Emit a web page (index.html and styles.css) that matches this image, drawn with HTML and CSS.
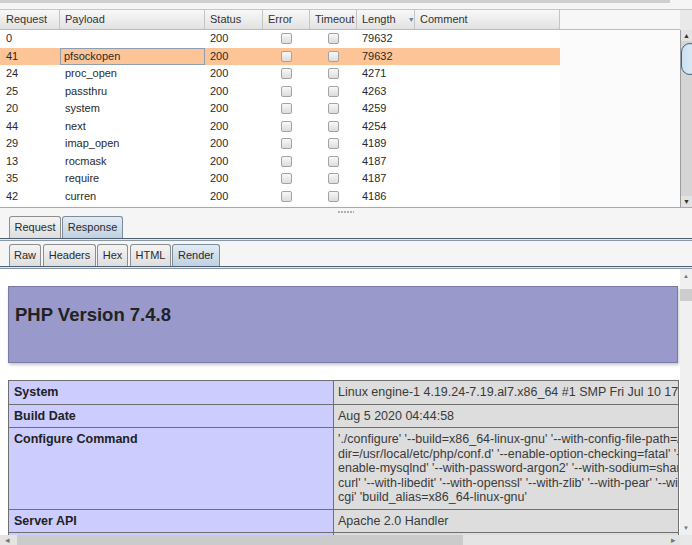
FILE: index.html
```html
<!DOCTYPE html>
<html>
<head>
<meta charset="utf-8">
<link rel="stylesheet" href="styles.css">
</head>
<body>
<div class="app">
  <div class="topstrip"></div>
  <div class="results">
    <div class="grid">
      <div class="thead">
        <div class="th c1">Request</div>
        <div class="th c2">Payload</div>
        <div class="th c3">Status</div>
        <div class="th c4">Error</div>
        <div class="th c5">Timeout</div>
        <div class="th c6 sorted">Length<span class="sort">▼</span></div>
        <div class="th c7">Comment</div>
        <div class="thfill"></div>
      </div>
      <div class="tbody">
        <div class="tr"><div class="td c1">0</div><div class="td c2"></div><div class="td c3">200</div><div class="td c4"><span class="cb"></span></div><div class="td c5"><span class="cb"></span></div><div class="td c6">79632</div><div class="td c7"></div></div>
        <div class="tr sel"><div class="td c1">41</div><div class="td c2 focus">pfsockopen</div><div class="td c3">200</div><div class="td c4"><span class="cb"></span></div><div class="td c5"><span class="cb"></span></div><div class="td c6">79632</div><div class="td c7"></div></div>
        <div class="tr"><div class="td c1">24</div><div class="td c2">proc_open</div><div class="td c3">200</div><div class="td c4"><span class="cb"></span></div><div class="td c5"><span class="cb"></span></div><div class="td c6">4271</div><div class="td c7"></div></div>
        <div class="tr"><div class="td c1">25</div><div class="td c2">passthru</div><div class="td c3">200</div><div class="td c4"><span class="cb"></span></div><div class="td c5"><span class="cb"></span></div><div class="td c6">4263</div><div class="td c7"></div></div>
        <div class="tr"><div class="td c1">20</div><div class="td c2">system</div><div class="td c3">200</div><div class="td c4"><span class="cb"></span></div><div class="td c5"><span class="cb"></span></div><div class="td c6">4259</div><div class="td c7"></div></div>
        <div class="tr"><div class="td c1">44</div><div class="td c2">next</div><div class="td c3">200</div><div class="td c4"><span class="cb"></span></div><div class="td c5"><span class="cb"></span></div><div class="td c6">4254</div><div class="td c7"></div></div>
        <div class="tr"><div class="td c1">29</div><div class="td c2">imap_open</div><div class="td c3">200</div><div class="td c4"><span class="cb"></span></div><div class="td c5"><span class="cb"></span></div><div class="td c6">4189</div><div class="td c7"></div></div>
        <div class="tr"><div class="td c1">13</div><div class="td c2">rocmask</div><div class="td c3">200</div><div class="td c4"><span class="cb"></span></div><div class="td c5"><span class="cb"></span></div><div class="td c6">4187</div><div class="td c7"></div></div>
        <div class="tr"><div class="td c1">35</div><div class="td c2">require</div><div class="td c3">200</div><div class="td c4"><span class="cb"></span></div><div class="td c5"><span class="cb"></span></div><div class="td c6">4187</div><div class="td c7"></div></div>
        <div class="tr"><div class="td c1">42</div><div class="td c2">curren</div><div class="td c3">200</div><div class="td c4"><span class="cb"></span></div><div class="td c5"><span class="cb"></span></div><div class="td c6">4186</div><div class="td c7"></div></div>
      </div>
    </div>
    <div class="vscroll">
      <div class="corner"></div>
      <div class="track">
        <div class="arrow up">▲</div>
        <div class="thumb"></div>
        <div class="trackfill"></div>
        <div class="arrow down">▼</div>
      </div>
    </div>
  </div>
  <div class="splitter"><span class="grip"></span></div>
  <div class="tabs">
    <div class="tab w-req">Request</div>
    <div class="tab active w-resp">Response</div>
  </div>
  <div class="tabline"></div>
  <div class="tabs tabs2">
    <div class="tab w-raw">Raw</div>
    <div class="tab w-hdr">Headers</div>
    <div class="tab w-hex">Hex</div>
    <div class="tab w-html">HTML</div>
    <div class="tab active w-render">Render</div>
  </div>
  <div class="tabline"></div>
  <div class="render">
    <div class="viewport">
      <div class="phpbox"><h1 class="phptitle">PHP Version 7.4.8</h1></div>
      <table class="info">
        <colgroup><col class="ce"><col class="cv"></colgroup>
        <tr><td class="e">System</td><td class="v">Linux engine-1 4.19.24-7.19.al7.x86_64 #1 SMP Fri Jul 10 17:08:10 CST 2020 x86_64</td></tr>
        <tr><td class="e">Build Date</td><td class="v">Aug 5 2020 04:44:58</td></tr>
        <tr><td class="e">Configure Command</td><td class="v"><div class="ln">'./configure' '--build=x86_64-linux-gnu' '--with-config-file-path=/usr/local/etc/php'</div><div class="ln">dir=/usr/local/etc/php/conf.d' '--enable-option-checking=fatal' '--with-mhash'</div><div class="ln">enable-mysqlnd' '--with-password-argon2' '--with-sodium=shared' '--with-pdo-sqlite=/usr'</div><div class="ln">curl' '--with-libedit' '--with-openssl' '--with-zlib' '--with-pear' '--with-libdir=lib'</div><div class="ln">cgi' 'build_alias=x86_64-linux-gnu'</div></td></tr>
        <tr><td class="e">Server API</td><td class="v">Apache 2.0 Handler</td></tr>
        <tr><td class="e">Virtual Directory Support</td><td class="v">disabled</td></tr>
      </table>
    </div>
    <div class="rvscroll">
      <div class="rarrow">▲</div>
      <div class="rthumb"></div>
      <div class="rfill"></div>
      <div class="rarrow">▼</div>
    </div>
    <div class="hscroll">
      <div class="harrow">◂</div>
      <div class="hthumb"></div>
      <div class="hfill"></div>
      <div class="harrow">▸</div>
    </div>
    <div class="hcorner"></div>
  </div>
</div>
</body>
</html>
```

FILE: styles.css
```css
html, body {
  margin: 0;
  padding: 0;
}
body {
  width: 692px;
  height: 545px;
  overflow: hidden;
  background: #f5f5f5;
  font-family: "Liberation Sans", Arial, sans-serif;
  font-size: 11px;
  color: #2a2a2a;
}
.app {
  display: flex;
  flex-direction: column;
  height: 545px;
}
.topstrip {
  height: 3px;
  width: 670px;
  background: #cfcfcf;
  margin-bottom: 6px;
}
.results {
  display: flex;
  height: 199px;
  box-sizing: border-box;
  border-top: 1px solid #c6c6c6;
  border-bottom: 1px solid #a9a9a9;
  background: #fbfbfb;
}
.grid {
  width: 680px;
  display: flex;
  flex-direction: column;
}
.thead {
  display: flex;
  height: 20px;
  box-sizing: border-box;
  border-bottom: 1px solid #bcbcbc;
}
.th {
  box-sizing: border-box;
  padding-left: 5px;
  line-height: 19px;
  border-right: 1px solid #c4c4c4;
  background: linear-gradient(#f8f8f8, #e2e2e2);
  color: #333;
  white-space: nowrap;
}
.thfill {
  flex: 1;
  background: #f7f7f7;
}
.c1 { width: 60px; padding-left: 6px; }
.c2 { width: 145px; }
.c3 { width: 58px; }
.c4 { width: 47px; }
.c5 { width: 47px; }
.c6 { width: 58px; }
.c7 { width: 145px; }
.sort {
  font-size: 7px;
  color: #5b86b4;
  margin-left: 12px;
  vertical-align: 1px;
}
.tbody {
  flex: 1;
}
.tr {
  display: flex;
  width: 560px;
  height: 17.5px;
  line-height: 17.5px;
  background: #fff;
}
.tr.sel {
  background: #fdc597;
}
.td {
  box-sizing: border-box;
  padding-left: 5px;
  color: #2a2a2a;
  white-space: nowrap;
}
.td.c1 { padding-left: 6px; }
.td.c4, .td.c5 {
  padding-left: 0;
  display: flex;
  align-items: center;
  justify-content: center;
}
.td.focus {
  padding-left: 4px;
  box-shadow: inset 0 0 0 1px #8d9eb1;
}
.cb {
  display: block;
  width: 11px;
  height: 11px;
  box-sizing: border-box;
  border: 1px solid #a3a3a3;
  border-radius: 2px;
  background: linear-gradient(#f8f8f8, #dcdcdc);
}
.vscroll {
  width: 12px;
  display: flex;
  flex-direction: column;
}
.corner {
  height: 20px;
  background: #e9e9e9;
}
.track {
  flex: 1;
  display: flex;
  flex-direction: column;
  background: #d5d5d5;
  border-left: 1px solid #9c9c9c;
  overflow: hidden;
}
.arrow {
  height: 11px;
  font-size: 7px;
  line-height: 11px;
  text-align: center;
  color: #333;
  background: #e3e3e3;
}
.thumb {
  height: 32px;
  margin-top: 2px;
  width: 18px;
  box-sizing: border-box;
  border: 1px solid #44607b;
  border-radius: 10px;
  background: linear-gradient(90deg, #cbe0f2, #e3eef8);
}
.trackfill {
  flex: 1;
}
.splitter {
  height: 8px;
  display: flex;
  justify-content: center;
  align-items: center;
}
.grip {
  display: block;
  width: 16px;
  height: 2px;
  background: repeating-linear-gradient(90deg, #b0b0b0 0 2px, transparent 2px 3px);
}
.tabs {
  display: flex;
  height: 22px;
  padding-left: 9px;
  gap: 1px;
  align-items: flex-end;
}
.tabs2 {
  margin-top: 3px;
}
.tab {
  box-sizing: border-box;
  height: 22px;
  line-height: 21px;
  text-align: center;
  border: 1px solid #8e8e8e;
  border-bottom: none;
  border-radius: 3px 3px 0 0;
  background: linear-gradient(#f4f4f4, #dedede);
  color: #2a2a2a;
}
.tab.active {
  border-color: #7d8c9b;
  background: linear-gradient(#e2ebf3, #bfd1e2);
}
.w-req { width: 52px; }
.w-resp { width: 61px; }
.w-raw { width: 32px; }
.w-hdr { width: 53px; margin-left: 1px; }
.w-hex { width: 31px; }
.w-html { width: 41px; margin-left: 1px; }
.w-render { width: 48px; }
.tabline {
  height: 3px;
  background: linear-gradient(#4e5f70 0 1px, #e4e9ee 1px 2px, #8a98a6 2px 3px);
}
.render {
  flex: 1;
  display: grid;
  grid-template-columns: 680px 12px;
  grid-template-rows: 266px 10px;
  background: #fff;
}
.viewport {
  overflow: hidden;
  padding: 17px 0 0 8px;
  box-sizing: border-box;
  background: #fff;
}
.phpbox {
  width: 670px;
  height: 77px;
  box-sizing: border-box;
  background: #9999cc;
  border: 1px solid #7a7aa8;
  box-shadow: 1px 2px 3px #c8c8c8;
  padding: 17px 6px 0;
}
.phptitle {
  margin: 0;
  font-size: 18.5px;
  line-height: 22px;
  font-weight: bold;
  color: #222;
}
.info {
  margin-top: 17px;
  width: 670px;
  table-layout: fixed;
  border-collapse: collapse;
  font-size: 12.5px;
}
.ce { width: 325px; }
.cv { width: 345px; }
.info td {
  border: 1px solid #6f6f6f;
  padding: 4px 5px 4px 5px;
  line-height: 14.5px;
  vertical-align: top;
  white-space: nowrap;
  overflow: hidden;
}
.info td.e {
  background: #ccccff;
  font-weight: bold;
  color: #222;
}
.info td.v {
  background: #dddddd;
  color: #3a3a3a;
  padding-left: 4px;
  padding-right: 0;
}
.ln {
  white-space: nowrap;
}
.rvscroll {
  display: flex;
  flex-direction: column;
  background: #f0f0f0;
}
.rarrow {
  height: 14px;
  font-size: 6px;
  line-height: 14px;
  text-align: center;
  color: #777;
}
.rthumb {
  height: 12px;
  margin-top: 6px;
  background: #cdcdcd;
}
.rfill {
  flex: 1;
}
.hscroll {
  display: flex;
  align-items: stretch;
  background: #e4e4e4;
}
.harrow {
  width: 14px;
  font-size: 9px;
  line-height: 10px;
  text-align: center;
  color: #777;
}
.hthumb {
  width: 446px;
  margin-left: 3px;
  background: #cbcbcb;
}
.hfill {
  flex: 1;
}
.hcorner {
  background: #e8e8e8;
}
```
